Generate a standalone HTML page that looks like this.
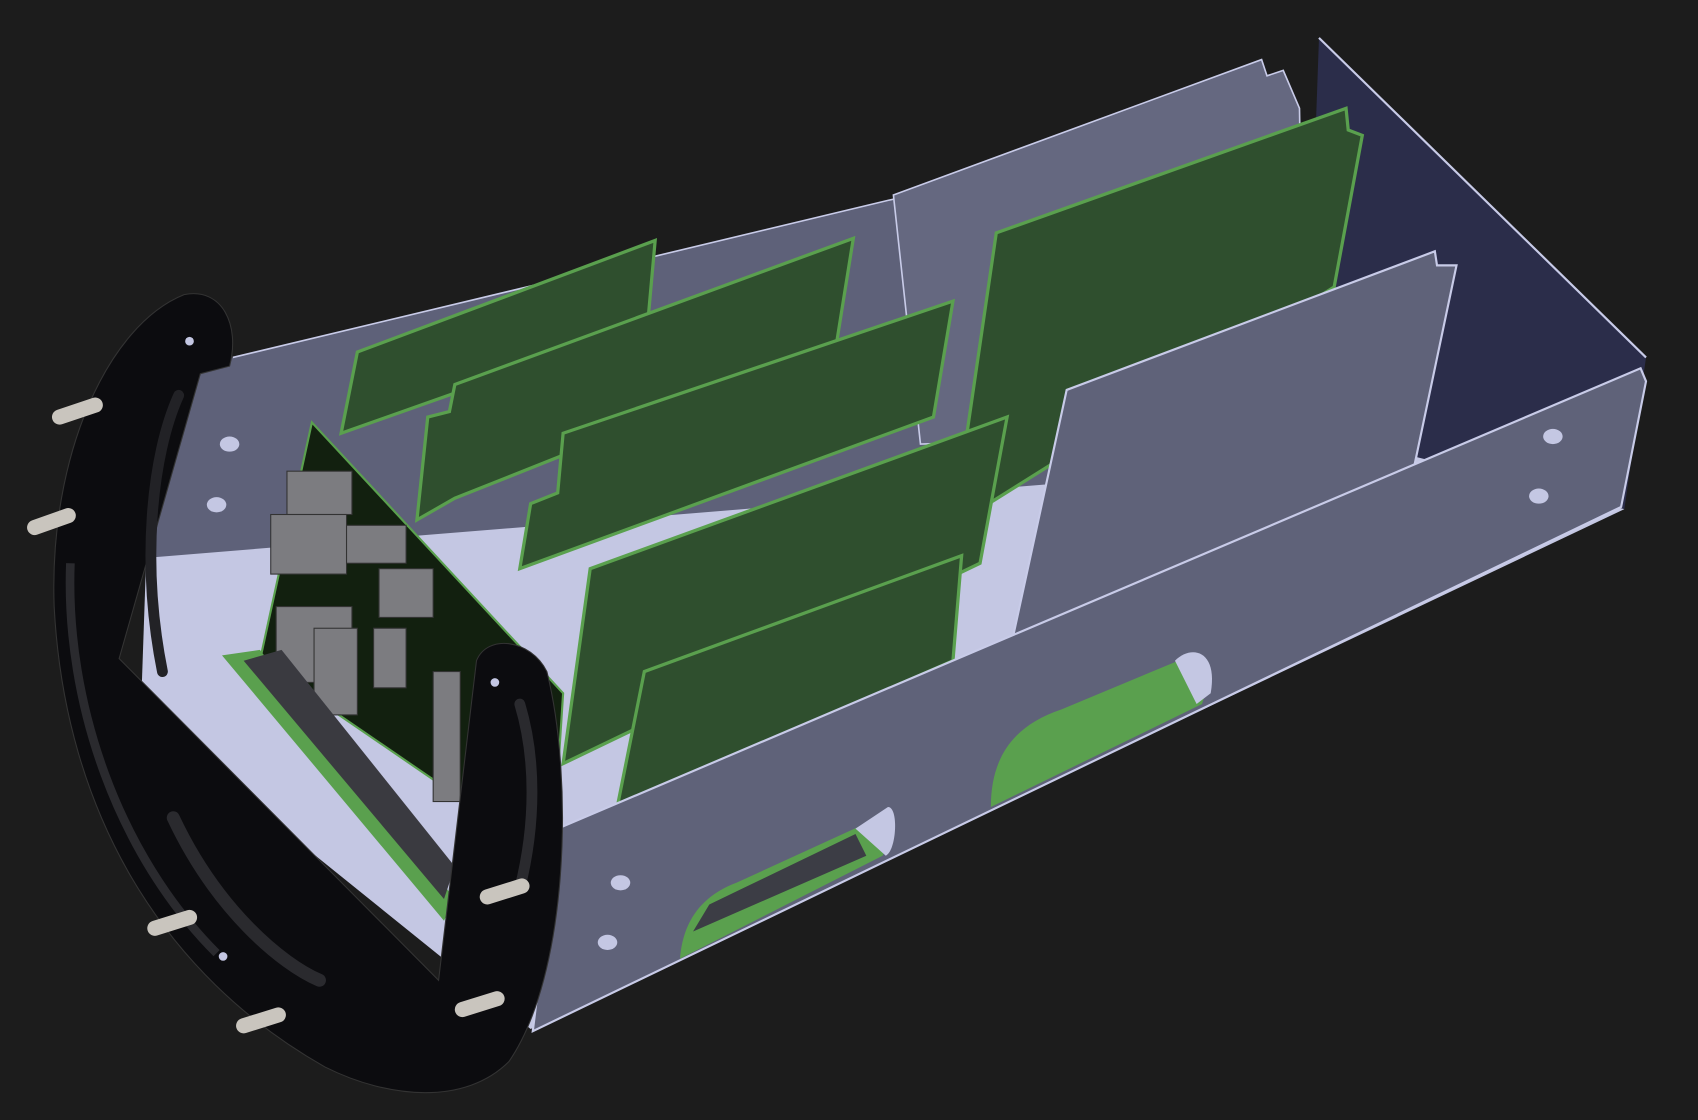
<!DOCTYPE html>
<html><head><style>
html,body{margin:0;padding:0;background:#1c1c1c;overflow:hidden}
svg{display:block}
</style></head><body>
<svg width="1698" height="1120" viewBox="0 0 1568 1034" preserveAspectRatio="none">
<rect width="1568" height="1034" fill="#1c1c1c"/>
<!-- back wall -->
<polygon points="140,350 215,330 820,185 1200,100 1210,420 140,560" fill="#5e6179"/>
<polyline points="215,330 820,185 1200,100" fill="none" stroke="#c8cbe8" stroke-width="1.5"/>
<!-- right end wall -->
<polygon points="1218,35 1520,330 1500,470 1205,400" fill="#2b2d4a"/>
<polygon points="1218,35 1520,330" stroke="#c8cbe8" stroke-width="2"/>
<!-- floor -->
<polygon points="135,515 1300,420 1500,470 490,950 130,660" fill="#c4c7e3"/>
<!-- gray board back -->
<polygon points="825,180 1165,55 1170,70 1185,65 1200,100 1205,400 850,410" fill="#656880" stroke="#c8cbe8" stroke-width="1.5"/>
<!-- green board right -->
<polygon points="920,215 1243,100 1245,120 1258,125 1232,265 905,470 890,420" fill="#2f4f2e" stroke="#5aa04e" stroke-width="3"/>
<!-- gray board front-right -->
<polygon points="985,360 1325,232 1327,245 1345,245 1305,435 935,590" fill="#5f6279" stroke="#c8cbe8" stroke-width="2"/>
<!-- green boards -->
<polygon points="330,325 605,222 598,300 315,400" fill="#2f4f2e" stroke="#5aa04e" stroke-width="3"/>
<polygon points="420,355 788,220 772,320 420,460 385,480 395,385 415,380" fill="#2f4f2e" stroke="#5aa04e" stroke-width="3"/>
<polygon points="520,400 880,278 862,385 480,525 490,465 515,455" fill="#2f4f2e" stroke="#5aa04e" stroke-width="3"/>
<polygon points="545,525 930,385 905,520 520,705" fill="#2f4f2e" stroke="#5aa04e" stroke-width="3"/>
<polygon points="595,620 888,513 880,610 570,745" fill="#2f4f2e" stroke="#5aa04e" stroke-width="3"/>
<!-- connector board -->
<polygon points="288,390 520,640 510,795 240,610" fill="#12200f" stroke="#5aa04e" stroke-width="2"/>
<polygon points="205,605 240,600 420,830 410,850" fill="#5aa04e"/>
<g fill="#7c7c80" stroke="#333" stroke-width="1">
<rect x="265" y="435" width="60" height="40"/><rect x="250" y="475" width="70" height="55"/>
<rect x="320" y="485" width="55" height="35"/><rect x="350" y="525" width="50" height="45"/>
<rect x="255" y="560" width="70" height="70"/><rect x="290" y="580" width="40" height="80"/>
<rect x="345" y="580" width="30" height="55"/><rect x="400" y="620" width="25" height="120"/>
</g>
<polygon points="225,610 260,600 420,800 410,830" fill="#3a3a40"/>
<!-- front wall -->
<polygon points="515,765 1515,340 1520,352 1497,468 492,952" fill="#5f6279" stroke="#c8cbe8" stroke-width="2"/>
<!-- cutouts -->
<path d="M915,745 C915,700 935,670 980,655 L1100,605 C1115,600 1122,615 1110,650 Z" fill="#5aa04e"/>
<path d="M1085,610 C1100,595 1125,600 1118,640 L1105,650 Z" fill="#c4c7e3"/>
<path d="M628,885 C630,860 640,830 680,815 L800,760 C815,745 825,745 825,770 L815,790 Z" fill="#5aa04e"/>
<polygon points="655,835 790,770 800,790 640,860" fill="#3c3d45"/>
<path d="M790,765 L820,745 C830,745 828,785 818,790 Z" fill="#c4c7e3"/>
<g fill="#c4c7e3"><ellipse cx="1434" cy="403" rx="9" ry="7"/><ellipse cx="1421" cy="458" rx="9" ry="7"/><ellipse cx="573" cy="815" rx="9" ry="7"/><ellipse cx="561" cy="870" rx="9" ry="7"/><ellipse cx="212" cy="410" rx="9" ry="7"/><ellipse cx="200" cy="466" rx="9" ry="7"/></g>
<!-- horseshoe bracket -->
<path d="M170,272 C205,265 222,300 212,338 L185,345 L110,608 L405,905 L440,610 C450,585 490,590 505,620 C530,720 525,900 470,980 C430,1020 360,1015 300,985 C150,900 60,750 50,560 C45,420 100,300 170,272 Z" fill="#0c0c0f" stroke="#333" stroke-width="1"/>
<path d="M65,520 C60,650 110,790 200,880" stroke="#2a2a2e" stroke-width="8" fill="none"/>
<path d="M150,620 C130,520 140,420 165,365" stroke="#222226" stroke-width="10" fill="none" stroke-linecap="round"/>
<path d="M160,755 C200,840 260,890 295,905" stroke="#2a2a2e" stroke-width="12" fill="none" stroke-linecap="round"/>
<path d="M480,650 C495,700 495,760 480,820" stroke="#2a2a2e" stroke-width="10" fill="none" stroke-linecap="round"/>
<g fill="#c4c7e3"><circle cx="175" cy="315" r="4"/><circle cx="457" cy="630" r="4"/><circle cx="206" cy="883" r="4"/></g>
<!-- pins -->
<g stroke-width="14" stroke-linecap="round" stroke="#c9c5be">
<line x1="55" y1="385" x2="88" y2="374"/>
<line x1="32" y1="487" x2="63" y2="476"/>
<line x1="143" y1="857" x2="175" y2="847"/>
<line x1="225" y1="947" x2="257" y2="937"/>
<line x1="450" y1="828" x2="482" y2="818"/>
<line x1="427" y1="932" x2="459" y2="922"/>
</g>
</svg>
</body></html>
